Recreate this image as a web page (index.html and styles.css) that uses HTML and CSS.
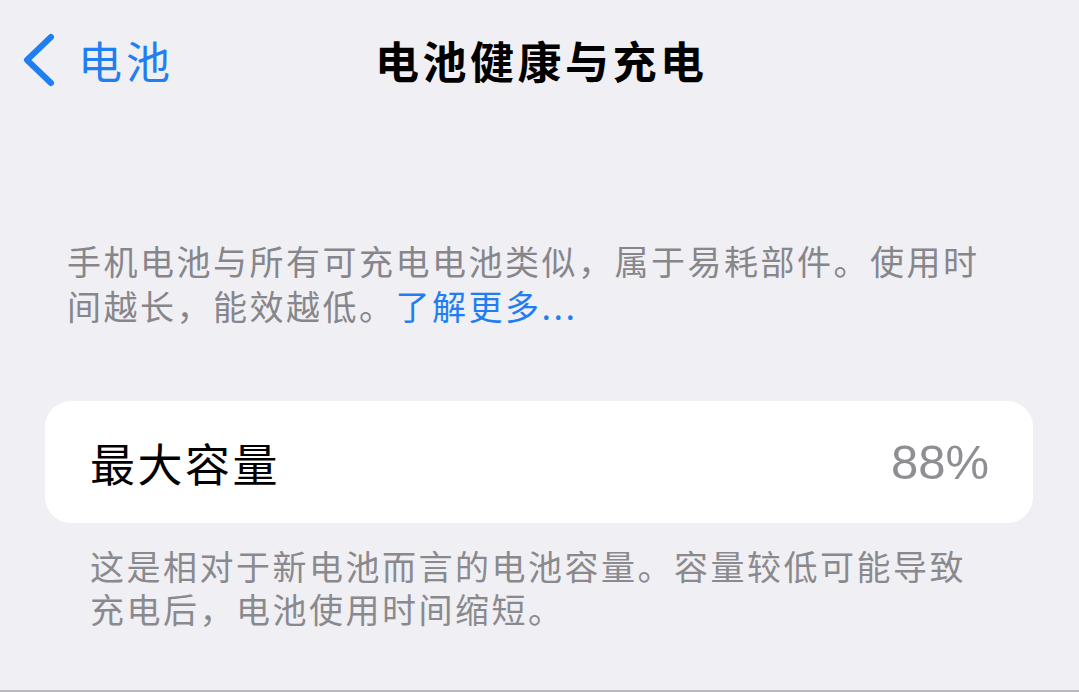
FILE: index.html
```html
<!DOCTYPE html>
<html lang="zh-CN">
<head>
    <meta charset="UTF-8">
    <meta name="viewport" content="width=device-width, initial-scale=1.0">
    <title>电池健康与充电</title>
    <link rel="stylesheet" href="styles.css">
</head>
<body>
    <!-- Navigation bar -->
    <div class="nav-bar">
        <a class="back-link" href="#">
            <svg class="back-chevron" width="34" height="54" viewBox="0 0 34 54">
                <path d="M29 4 L5 27 L29 50" fill="none" stroke="currentColor" stroke-width="6" stroke-linecap="round" stroke-linejoin="round"/>
            </svg>
            <span>电池</span>
        </a>
        <h1 class="nav-title">电池健康与充电</h1>
        <div></div>
    </div>

    <p class="intro-text">
        <span>手机电池与所有可充电电池类似，属于易耗部件。使用时</span><br>
        <span>间越长，能效越低。</span><a href="#" class="learn-more">了解更多...</a>
    </p>

    <div class="capacity-card">
        <span class="capacity-label">最大容量</span>
        <span class="capacity-value">88%</span>
    </div>

    <p class="footnote">这是相对于新电池而言的电池容量。容量较低可能导致充电后，电池使用时间缩短。</p>

    <div class="bottom-edge"></div>
</body>
</html>
```

FILE: styles.css
```css
body {
    margin: 0;
    min-height: 100vh;
    display: flex;
    flex-direction: column;
    background-color: #f0eff4;
    font-family: "Noto Sans CJK SC", "Noto Sans", sans-serif;
    color: #000000;
}

.nav-bar {
    display: grid;
    grid-template-columns: 1fr auto 1fr;
    align-items: center;
    height: 120px;
}

.back-link {
    display: flex;
    align-items: center;
    gap: 22px;
    padding-left: 22px;
    color: #1f7ff2;
    text-decoration: none;
    font-size: 44px;
    letter-spacing: 4px;
}

.back-chevron {
    flex-shrink: 0;
}

.nav-title {
    margin: 0;
    font-size: 44px;
    font-weight: bold;
    letter-spacing: 3.5px;
    margin-right: -3.5px;
}

.intro-text {
    margin: 118px 0 0 67px;
    width: 930px;
    font-size: 34px;
    line-height: 45px;
    letter-spacing: 2.5px;
    color: #86868b;
}

.learn-more {
    color: #1f7ff2;
    text-decoration: none;
}

.capacity-card {
    display: flex;
    justify-content: space-between;
    align-items: center;
    margin: 73px 46px 0 45px;
    height: 122px;
    padding: 0 44px 0 45px;
    background-color: #ffffff;
    border-radius: 26px;
}

.capacity-label {
    font-size: 45px;
    letter-spacing: 2.5px;
}

.capacity-value {
    font-family: "Liberation Sans", Arial, sans-serif;
    font-size: 49px;
    color: #8e8e93;
}

.footnote {
    margin: 21px 0 0 90px;
    width: 895px;
    font-size: 34px;
    line-height: 43px;
    letter-spacing: 2.5px;
    color: #8a8a8e;
}

.bottom-edge {
    margin-top: auto;
    height: 2px;
    background-color: #b9b9be;
}
```
